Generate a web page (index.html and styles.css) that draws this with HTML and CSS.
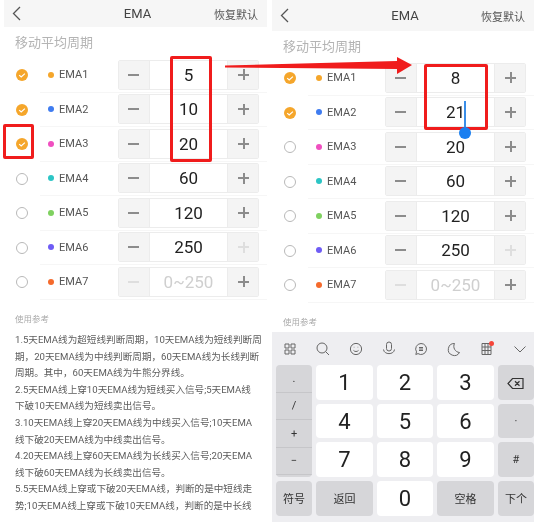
FILE: index.html
```html
<!DOCTYPE html>
<html lang="zh-CN">
<head>
    <meta charset="UTF-8">
    <meta name="viewport" content="width=device-width, initial-scale=1.0">
    <title>EMA</title>
    <link rel="stylesheet" href="styles.css">
</head>
<body>
    <svg width="0" height="0" class="defs">
        <symbol id="back" viewBox="0 0 9 15"><path d="M8 1 1.5 7.5 8 14" fill="none" stroke="#555" stroke-width="1.3"/></symbol>
        <symbol id="checked" viewBox="0 0 12 12"><circle cx="6" cy="6" r="6" fill="#f5a62b"/><path d="M3.2 6.1 5.2 8 8.9 4.6" fill="none" stroke="#fff" stroke-width="1.2"/></symbol>
    </svg>

    <div class="phone phone-left">
        <div class="header">
            <svg class="back"><use href="#back"/></svg>
            <span class="header-title">EMA</span>
            <span class="header-reset">恢复默认</span>
        </div>
        <div class="section-title">移动平均周期</div>

        <div class="row">
            <svg class="check"><use href="#checked"/></svg>
            <div class="row-body">
                <i class="dot dot-orange"></i><span class="row-name">EMA1</span>
                <div class="stepper"><span class="step minus"></span><span class="value">5</span><span class="step plus"></span></div>
            </div>
        </div>
        <div class="row">
            <svg class="check"><use href="#checked"/></svg>
            <div class="row-body">
                <i class="dot dot-blue"></i><span class="row-name">EMA2</span>
                <div class="stepper"><span class="step minus"></span><span class="value">10</span><span class="step plus"></span></div>
            </div>
        </div>
        <div class="row">
            <svg class="check"><use href="#checked"/></svg>
            <div class="row-body">
                <i class="dot dot-pink"></i><span class="row-name">EMA3</span>
                <div class="stepper"><span class="step minus"></span><span class="value">20</span><span class="step plus"></span></div>
            </div>
        </div>
        <div class="row">
            <i class="check check-off"></i>
            <div class="row-body">
                <i class="dot dot-teal"></i><span class="row-name">EMA4</span>
                <div class="stepper"><span class="step minus"></span><span class="value">60</span><span class="step plus"></span></div>
            </div>
        </div>
        <div class="row">
            <i class="check check-off"></i>
            <div class="row-body">
                <i class="dot dot-green"></i><span class="row-name">EMA5</span>
                <div class="stepper"><span class="step minus"></span><span class="value">120</span><span class="step plus"></span></div>
            </div>
        </div>
        <div class="row">
            <i class="check check-off"></i>
            <div class="row-body">
                <i class="dot dot-purple"></i><span class="row-name">EMA6</span>
                <div class="stepper"><span class="step minus"></span><span class="value">250</span><span class="step plus off"></span></div>
            </div>
        </div>
        <div class="row">
            <i class="check check-off"></i>
            <div class="row-body">
                <i class="dot dot-red"></i><span class="row-name">EMA7</span>
                <div class="stepper"><span class="step minus off"></span><span class="value value-empty">0~250</span><span class="step plus"></span></div>
            </div>
        </div>

        <div class="notes-title">使用参考</div>
        <p class="notes">
            1.5天EMA线为超短线判断周期，10天EMA线为短线判断周<br>
            期，20天EMA线为中线判断周期，60天EMA线为长线判断<br>
            周期。其中，60天EMA线为牛熊分界线。<br>
            2.5天EMA线上穿10天EMA线为短线买入信号;5天EMA线<br>
            下破10天EMA线为短线卖出信号。<br>
            3.10天EMA线上穿20天EMA线为中线买入信号;10天EMA<br>
            线下破20天EMA线为中线卖出信号。<br>
            4.20天EMA线上穿60天EMA线为长线买入信号;20天EMA<br>
            线下破60天EMA线为长线卖出信号。<br>
            5.5天EMA线上穿或下破20天EMA线，判断的是中短线走<br>
            势;10天EMA线上穿或下破10天EMA线，判断的是中长线
        </p>
    </div>

    <div class="phone phone-right">
        <div class="header">
            <svg class="back"><use href="#back"/></svg>
            <span class="header-title">EMA</span>
            <span class="header-reset">恢复默认</span>
        </div>
        <div class="section-title">移动平均周期</div>

        <div class="row">
            <svg class="check"><use href="#checked"/></svg>
            <div class="row-body">
                <i class="dot dot-orange"></i><span class="row-name">EMA1</span>
                <div class="stepper"><span class="step minus"></span><span class="value">8</span><span class="step plus"></span></div>
            </div>
        </div>
        <div class="row">
            <svg class="check"><use href="#checked"/></svg>
            <div class="row-body">
                <i class="dot dot-blue"></i><span class="row-name">EMA2</span>
                <div class="stepper"><span class="step minus"></span><span class="value">21</span><span class="step plus"></span></div>
            </div>
        </div>
        <div class="row">
            <i class="check check-off"></i>
            <div class="row-body">
                <i class="dot dot-pink"></i><span class="row-name">EMA3</span>
                <div class="stepper"><span class="step minus"></span><span class="value">20</span><span class="step plus"></span></div>
            </div>
        </div>
        <div class="row">
            <i class="check check-off"></i>
            <div class="row-body">
                <i class="dot dot-teal"></i><span class="row-name">EMA4</span>
                <div class="stepper"><span class="step minus"></span><span class="value">60</span><span class="step plus"></span></div>
            </div>
        </div>
        <div class="row">
            <i class="check check-off"></i>
            <div class="row-body">
                <i class="dot dot-green"></i><span class="row-name">EMA5</span>
                <div class="stepper"><span class="step minus"></span><span class="value">120</span><span class="step plus"></span></div>
            </div>
        </div>
        <div class="row">
            <i class="check check-off"></i>
            <div class="row-body">
                <i class="dot dot-purple"></i><span class="row-name">EMA6</span>
                <div class="stepper"><span class="step minus"></span><span class="value">250</span><span class="step plus off"></span></div>
            </div>
        </div>
        <div class="row">
            <i class="check check-off"></i>
            <div class="row-body">
                <i class="dot dot-red"></i><span class="row-name">EMA7</span>
                <div class="stepper"><span class="step minus off"></span><span class="value value-empty">0~250</span><span class="step plus"></span></div>
            </div>
        </div>

        <div class="notes-title">使用参考</div>

        <div class="keyboard">
            <div class="toolbar">
                <svg class="tool" viewBox="0 0 18 18"><path d="M4 4h4v4H4zM10 4h4v4h-4zM4 10h4v4H4zM10 10h4v4h-4z"/></svg>
                <svg class="tool" viewBox="0 0 18 18"><circle cx="8" cy="8" r="5"/><path d="m11.700 11.700 3.300 3.300"/></svg>
                <svg class="tool" viewBox="0 0 18 18"><circle cx="9" cy="9" r="5.600"/><path d="M6.500 10.400c1.200 1.500 3.800 1.500 5 0M6.800 7.200h.5M10.700 7.200h.5"/></svg>
                <svg class="tool" viewBox="0 0 18 18"><rect x="6.500" y="2" width="5" height="9" rx="2.500"/><path d="M3.500 9.500c.5 5.500 10.500 5.500 11 0"/></svg>
                <svg class="tool" viewBox="0 0 18 18"><path d="M9 3.500a5.500 5.500 0 1 1-3 10.100L3.800 14.500l.7-2.600A5.500 5.500 0 0 1 9 3.500z"/><path d="M7 7.500h4M7 9h4M7 10.500h4"/></svg>
                <svg class="tool" viewBox="0 0 18 18"><path d="M9.500 3.500a6 6 0 1 0 5 9 6.200 6.200 0 0 1-5-9z"/></svg>
                <span class="tool-news">
                    <svg class="tool" viewBox="0 0 18 18"><path d="M4 3.500h9v11H4zM4 7h9M4 10.500h9M7 3.500v11M10 3.500v11"/></svg>
                    <i class="tool-badge"></i>
                </span>
                <svg class="tool" viewBox="0 0 18 18"><path d="m3.500 6.500 5.500 5.500 5.500-5.500"/></svg>
            </div>
            <div class="keys">
                <div class="key-symbols">
                    <span>.</span><span>/</span><span>+</span><span>−</span>
                </div>
                <button class="key">1</button>
                <button class="key">2</button>
                <button class="key">3</button>
                <button class="key key-gray">
                    <svg class="del" viewBox="0 0 18 13"><path d="M5.500 1.500H16v10H5.500L1 6.500zM8 4.300l4.500 4.400M12.500 4.300 8 8.700"/></svg>
                </button>
                <button class="key">4</button>
                <button class="key">5</button>
                <button class="key">6</button>
                <button class="key key-gray key-small">·</button>
                <button class="key">7</button>
                <button class="key">8</button>
                <button class="key">9</button>
                <button class="key key-gray key-small">#</button>
                <button class="key key-gray key-small">符号</button>
                <button class="key key-gray key-small">返回</button>
                <button class="key">0</button>
                <button class="key key-gray key-small">空格</button>
                <button class="key key-gray key-small">下个</button>
            </div>
        </div>
    </div>

    <!-- annotations drawn on top of the two screenshots -->
    <div class="mark mark-values"></div>
    <div class="mark mark-check"></div>
    <div class="mark mark-edited"></div>
    <svg class="arrow" width="534" height="100" viewBox="0 0 534 100"><polygon points="225,65.500 397,61 397,57 412,65 397,74 397,69 225,67.500"/></svg>
    <div class="cursor"></div>
</body>
</html>
```

FILE: styles.css
```css
* {
    box-sizing: border-box;
}
html, body {
    height: 522px;
    overflow: hidden;
}
body {
    margin: 0;
    padding-left: 4px;
    display: flex;
    gap: 5px;
    background-color: #fff;
    color: #444;
    font-family: Roboto, "Noto Sans CJK SC", sans-serif;
}
.defs {
    position: absolute;
}
.phone {
    height: 522px;
    overflow: hidden;
    filter: blur(0.45px);
}
.phone-left {
    width: 263px;
}
.phone-right {
    width: 262px;
}

/* Header */
.header {
    display: flex;
    align-items: center;
    justify-content: space-between;
    height: 27px;
    padding: 0 9px 0 8px;
    background-color: #f6f6f6;
}
.phone-right .header {
    height: 31px;
}
.back {
    width: 9px;
    height: 15px;
}
.header-title {
    font-size: 13px;
    color: #444;
    margin-left: 40px;
}
.header-reset {
    font-size: 11px;
    color: #555;
}
.section-title {
    height: 31px;
    padding: 8px 0 0 11px;
    font-size: 13px;
    line-height: 16px;
    color: #b4b4b4;
}
.phone-right .section-title {
    height: 30px;
}

/* Rows */
.row {
    display: flex;
    align-items: center;
    height: 34.5px;
    padding-left: 12px;
}
.check {
    display: block;
    flex: none;
    width: 12px;
    height: 12px;
}
.check-off {
    border: 1px solid #b8b8b8;
    border-radius: 50%;
}
.row-body {
    display: flex;
    align-items: center;
    flex: 1;
    height: 100%;
    margin-left: 12px;
    padding: 0 8px 0 8px;
    border-bottom: 1px solid #f6f6f6;
}
.row:last-of-type .row-body {
    border-bottom: none;
}
.dot {
    width: 6px;
    height: 6px;
    border-radius: 50%;
}
.dot-orange { background-color: #f5a62b; }
.dot-blue { background-color: #3f7cf0; }
.dot-pink { background-color: #f04fc0; }
.dot-teal { background-color: #2cc5c5; }
.dot-green { background-color: #7fd160; }
.dot-purple { background-color: #6e5cf5; }
.dot-red { background-color: #f56a2c; }
.row-name {
    margin-left: 5px;
    font-size: 11px;
    color: #555;
}

/* Stepper */
.stepper {
    display: flex;
    width: 141px;
    height: 30px;
    margin-left: auto;
    border: 1px solid #ececec;
    border-radius: 2px;
}
.step {
    position: relative;
    flex: none;
    width: 30px;
    background-color: #f4f4f4;
}
.minus::before, .plus::before, .plus::after {
    content: "";
    position: absolute;
    left: 9px;
    top: 13px;
    width: 11px;
    height: 2px;
    background-color: #8c8c8c;
}
.plus::before {
    left: 10px;
}
.plus::after {
    left: 14.500px;
    top: 8.500px;
    width: 2px;
    height: 11px;
}
.off::before, .off::after {
    background-color: #dedede;
}
.value {
    flex: 1;
    text-align: center;
    font-size: 17px;
    line-height: 28px;
    color: #222;
    border-left: 1px solid #ececec;
    border-right: 1px solid #ececec;
}
.value-empty {
    color: #cfcfcf;
}

/* Notes */
.notes-title {
    padding: 13px 0 3.500px 11px;
    font-size: 8.500px;
    line-height: 13px;
    color: #aaa;
}
.notes {
    margin: 0;
    padding: 3px 0 0 11px;
    font-size: 9.600px;
    line-height: 16.600px;
    color: #5c5c5c;
    white-space: nowrap;
}

/* Keyboard */
.keyboard {
    height: 190px;
    background-color: #eeeef1;
    padding: 0 0 5px 4px;
}
.toolbar {
    display: flex;
    align-items: center;
    justify-content: space-between;
    height: 33px;
    padding: 0 5px 0 5px;
}
.tool {
    display: block;
    width: 18px;
    height: 18px;
    fill: none;
    stroke: #666;
    stroke-width: 1;
}
.tool-news {
    position: relative;
}
.tool-badge {
    position: absolute;
    top: 1px;
    right: 2px;
    width: 5px;
    height: 5px;
    border-radius: 50%;
    background-color: #f5453a;
}
.keys {
    display: grid;
    grid-template-columns: 36px 57px 56px 57px 36px;
    grid-auto-rows: 34.700px;
    gap: 4px;
}
.key {
    padding: 0;
    border: none;
    border-radius: 4px;
    background-color: #fff;
    color: #222;
    font-family: inherit;
    font-size: 22px;
}
.key-gray {
    background-color: #d6d6d9;
}
.key-small {
    font-size: 11px;
    color: #333;
}
.del {
    width: 18px;
    height: 13px;
    fill: none;
    stroke: #333;
    stroke-width: 1.200;
}
.key-symbols {
    grid-row: span 3;
    display: grid;
    grid-auto-rows: 27.500px;
    border-radius: 4px;
    background-color: #d6d6d9;
    font-size: 11px;
    color: #333;
    overflow: hidden;
}
.key-symbols span {
    display: flex;
    align-items: center;
    justify-content: center;
    border-bottom: 1px solid #c6c6c9;
}

/* Annotations */
.mark {
    position: absolute;
    border: 3px solid #f01c1c;
    border-radius: 2px;
}
.mark-values {
    left: 170px;
    top: 56px;
    width: 42px;
    height: 106px;
}
.mark-check {
    left: 3px;
    top: 124px;
    width: 31px;
    height: 35px;
}
.mark-edited {
    left: 424px;
    top: 64px;
    width: 64px;
    height: 66px;
}
.arrow {
    position: absolute;
    left: 0;
    top: 0;
    fill: #f01c1c;
}
.cursor {
    position: absolute;
    left: 464px;
    top: 101px;
    width: 2px;
    height: 28px;
    background-color: #3a8ee8;
}
.cursor::after {
    content: "";
    position: absolute;
    left: -5px;
    top: 26px;
    width: 12px;
    height: 12px;
    border-radius: 50%;
    background-color: #1a7ff0;
}
```
